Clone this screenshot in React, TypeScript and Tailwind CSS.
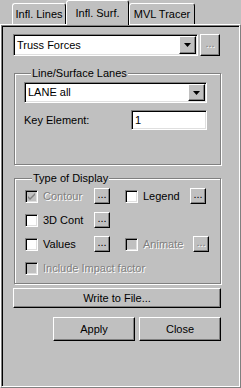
import React from 'react';

const raised =
  'border border-t-white border-l-white border-r-black border-b-black shadow-[inset_-1px_-1px_0_#808080]';
const sunken =
  'border border-t-[#808080] border-l-[#808080] border-r-white border-b-white shadow-[inset_1px_1px_0_#000,inset_-1px_-1px_0_#dfdfdf]';
const disabledText = 'text-[#808080] [text-shadow:1px_1px_0_#fff]';

const Arrow: React.FC = () => (
  <svg width="7" height="4" viewBox="0 0 7 4">
    <path d="M0 0h7L3.5 4z" fill="#000" />
  </svg>
);

const Combo: React.FC<{ value: string; width: string; height: string }> = ({ value, width, height }) => (
  <div className={`${sunken} ${width} ${height} bg-white flex items-stretch p-[1px]`}>
    <div className="flex-1 flex items-center pl-[2px] leading-none">{value}</div>
    <div className={`${raised} w-[17px] bg-[#c0c0c0] flex items-center justify-center`}>
      <Arrow />
    </div>
  </div>
);

const Dots: React.FC<{ disabled?: boolean; className?: string }> = ({ disabled, className = '' }) => (
  <div
    className={`${raised} bg-[#c0c0c0] flex items-center justify-center leading-none pb-[3px] ${
      disabled ? disabledText : ''
    } ${className}`}
  >
    ...
  </div>
);

const Check: React.FC<{ checked?: boolean; disabled?: boolean; label: string }> = ({
  checked,
  disabled,
  label,
}) => (
  <div className="flex items-center">
    <div
      className={`${sunken} w-[13px] h-[13px] flex items-center justify-center ${
        disabled ? 'bg-[#c0c0c0]' : 'bg-white'
      }`}
    >
      {checked && (
        <svg width="7" height="7" viewBox="0 0 7 7">
          <path d="M0 3l2 2 5-5v2l-5 5-2-2z" fill={disabled ? '#808080' : '#000'} />
        </svg>
      )}
    </div>
    <span className={`ml-[5px] leading-none ${disabled ? disabledText : ''}`}>{label}</span>
  </div>
);

const Group: React.FC<{ title: string; className: string; children: React.ReactNode }> = ({
  title,
  className,
  children,
}) => (
  <div
    className={`border border-[#808080] shadow-[inset_1px_1px_0_#fff,1px_1px_0_#fff] ${className}`}
  >
    <div className="-mt-[7px] ml-[7px] px-[1px] w-fit h-[13px] leading-[13px] bg-[#c0c0c0]">
      {title}
    </div>
    {children}
  </div>
);

const App: React.FC = () => {
  return (
    <div className="w-[241px] h-[388px] bg-[#c0c0c0] text-black text-[11px] font-['Liberation_Sans',Arial,sans-serif] flex flex-col overflow-hidden">
      {/* tabs */}
      <div className="h-[24px] flex items-end pl-[12px] shrink-0">
        <div className="w-[54px] h-[21px] border-t border-l border-r border-t-white border-l-white border-r-black rounded-t-[3px] flex items-center justify-center">
          Infl. Lines
        </div>
        <div className="relative z-10 w-[63px] h-[25px] -mb-px border-t border-l border-r border-t-white border-l-white border-r-black rounded-t-[3px] bg-[#c0c0c0] flex items-center justify-center">
          Infl. Surf.
        </div>
        <div className="w-[66px] h-[21px] border-t border-l border-r border-t-white border-l-white border-r-black rounded-t-[3px] flex items-center justify-center">
          MVL Tracer
        </div>
      </div>

      {/* page */}
      <div className="flex-1 flex border border-t-white border-l-white border-r-[#808080] border-b-[#808080]">
        <div className="flex-1 border border-t-[#808080] border-l-[#808080] border-r-white border-b-white shadow-[inset_1px_1px_0_#000] pl-[11px] pt-[8px] flex flex-col">
          <div className="flex items-center">
            <Combo value="Truss Forces" width="w-[185px]" height="h-[22px]" />
            <Dots disabled className="ml-[2px] w-[20px] h-[22px]" />
          </div>

          <Group title="Line/Surface Lanes" className="mt-[17px] ml-[1px] w-[207px] h-[92px] pl-[9px]">
            <div className="mt-[2px]">
              <Combo value="LANE all" width="w-[183px]" height="h-[21px]" />
            </div>
            <div className="mt-[7px] w-[183px] flex items-center justify-between">
              <span className="leading-none">Key Element:</span>
              <div className={`${sunken} w-[76px] h-[20px] bg-white flex items-center pl-[3px] leading-none`}>
                1
              </div>
            </div>
          </Group>

          <Group title="Type of Display" className="mt-[13px] ml-[1px] w-[207px] h-[106px] pl-[10px]">
            <div className="mt-[3px] flex flex-col gap-[8px]">
              <div className="flex items-center h-[16px]">
                <div className="w-[69px]">
                  <Check checked disabled label="Contour" />
                </div>
                <Dots className="w-[16px] h-[16px]" />
                <div className="ml-[15px] w-[65px]">
                  <Check label="Legend" />
                </div>
                <Dots className="w-[16px] h-[16px]" />
              </div>
              <div className="flex items-center h-[16px]">
                <div className="w-[69px]">
                  <Check label="3D Cont" />
                </div>
                <Dots className="w-[16px] h-[16px]" />
              </div>
              <div className="flex items-center h-[16px]">
                <div className="w-[69px]">
                  <Check label="Values" />
                </div>
                <Dots className="w-[16px] h-[16px]" />
                <div className="ml-[15px] w-[68px]">
                  <Check disabled label="Animate" />
                </div>
                <Dots disabled className="w-[16px] h-[16px]" />
              </div>
              <div className="flex items-center h-[16px]">
                <Check disabled label="Include Impact factor" />
              </div>
            </div>
          </Group>

          <div className={`${raised} mt-[4px] w-[208px] h-[20px] flex items-center justify-center leading-none`}>
            Write to File...
          </div>

          <div className="mt-[9px] ml-[40px] flex gap-[4px]">
            <div className={`${raised} w-[82px] h-[24px] flex items-center justify-center leading-none`}>
              Apply
            </div>
            <div className={`${raised} w-[82px] h-[24px] flex items-center justify-center leading-none`}>
              Close
            </div>
          </div>
        </div>
      </div>
    </div>
  );
};

export default App;
